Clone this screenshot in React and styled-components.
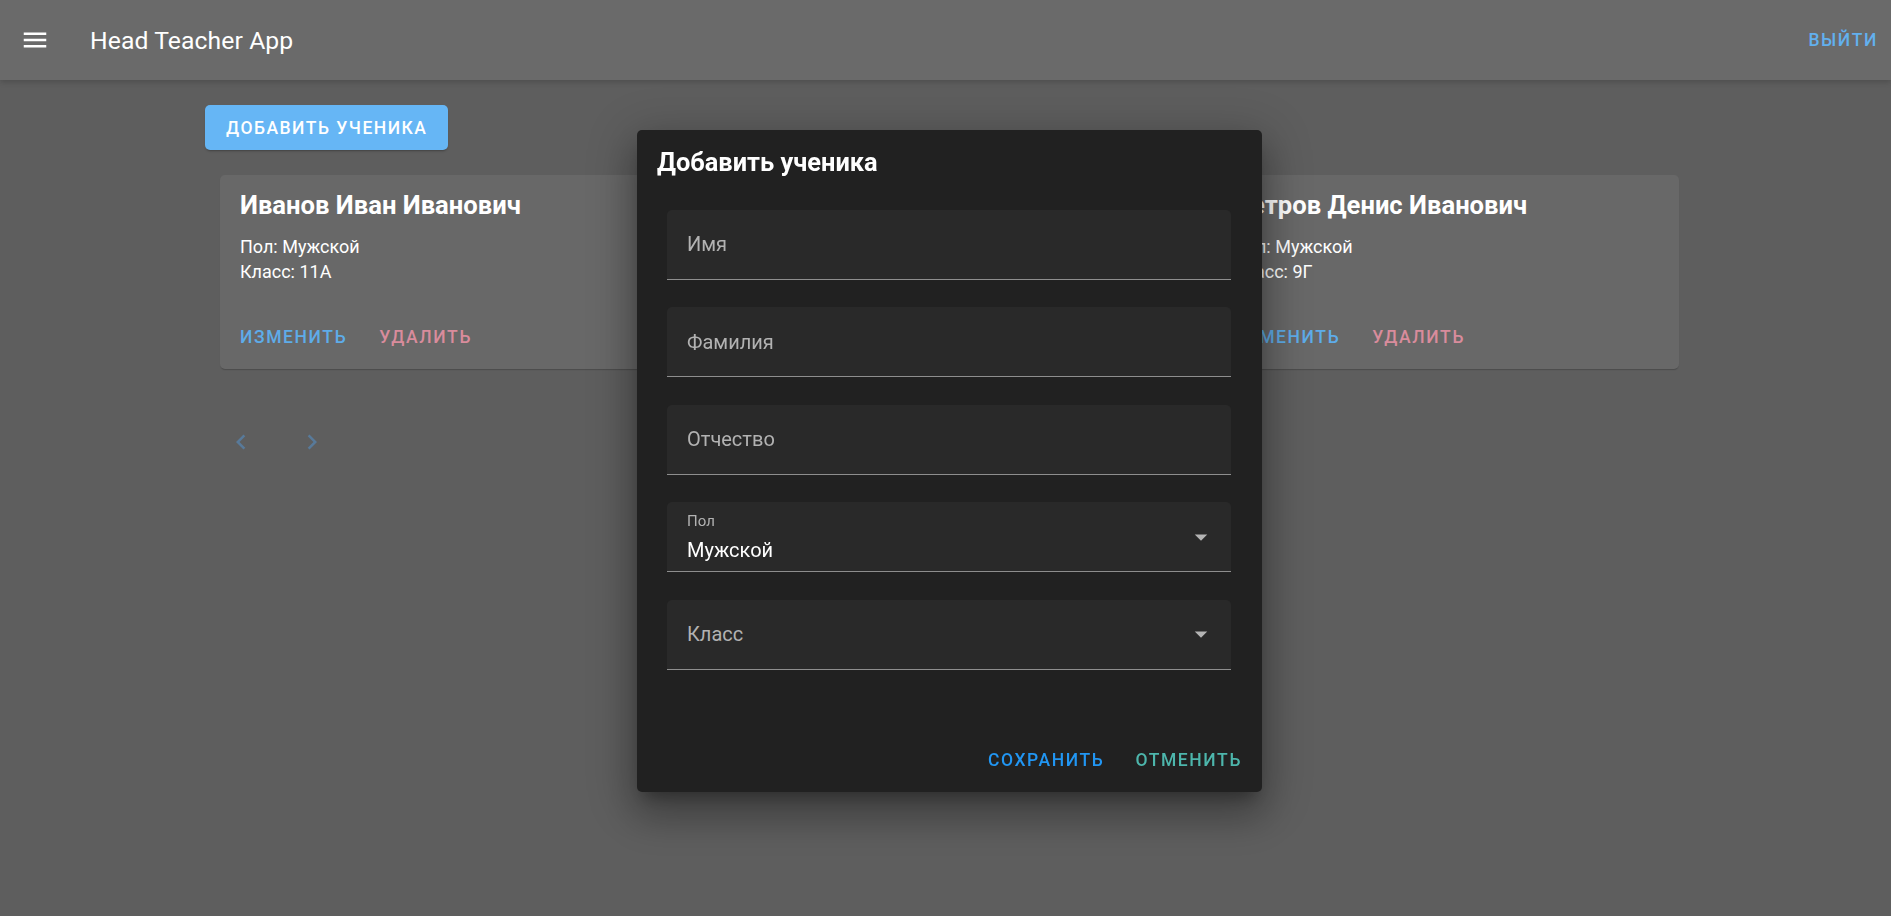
import React from 'react';
import styled, { createGlobalStyle } from 'styled-components';

const students = [
    { id: 1, name: 'Иванов Иван Иванович', gender: 'Мужской', grade: '11А' },
    { id: 2, name: 'Петров Денис Иванович', gender: 'Мужской', grade: '9Г' },
];

const fields = [
    { label: 'Имя' },
    { label: 'Фамилия' },
    { label: 'Отчество' },
    { label: 'Пол', value: 'Мужской', select: true },
    { label: 'Класс', select: true },
];

const GlobalStyle = createGlobalStyle`
    html, body {
        margin: 0;
        padding: 0;
        background: #5e5e5e;
        font-family: Roboto, "Noto Sans", sans-serif;
        overflow: hidden;
    }
`;

const Page = styled.div`
    min-height: 916px;
    background: #5e5e5e;
`;

const AppBar = styled.header`
    height: 80px;
    display: flex;
    align-items: center;
    padding: 0 3px 0 20px;
    background: #6a6a6a;
    box-shadow: 0 2px 4px -1px rgba(0, 0, 0, 0.1), 0 4px 5px 0 rgba(0, 0, 0, 0.07);
    color: #fff;
`;

const MenuButton = styled.span`
    display: flex;
    width: 30px;
    height: 30px;
    margin-right: 40px;
`;

const AppTitle = styled.h1`
    flex: 1;
    margin: 0;
    font-size: 24.7px;
    font-weight: 400;
    letter-spacing: 0.1px;
`;

const TextButton = styled.button`
    border: none;
    background: none;
    padding: 7px 10px;
    margin: 0;
    font-family: Roboto, sans-serif;
    font-size: 17.5px;
    font-weight: 500;
    line-height: 30px;
    letter-spacing: 1.6px;
    text-transform: uppercase;
    color: ${(p) => p.$color};
    cursor: pointer;
`;

const Main = styled.main`
    padding: 25px 0 0 205px;
`;

const AddButton = styled.button`
    height: 45px;
    padding: 0 21px;
    border: none;
    border-radius: 5px;
    background: #66b6f5;
    color: #fff;
    font-family: Roboto, sans-serif;
    font-size: 17.5px;
    font-weight: 500;
    letter-spacing: 1.5px;
    text-transform: uppercase;
    box-shadow: 0 3px 1px -2px rgba(0, 0, 0, 0.15), 0 2px 2px 0 rgba(0, 0, 0, 0.1);
`;

const CardRow = styled.div`
    display: flex;
    justify-content: space-between;
    width: 1459px;
    margin: 25px 0 0 15px;
`;

const Card = styled.div`
    width: 466px;
    height: 194px;
    box-sizing: border-box;
    padding: 15px 10px 0;
    border-radius: 5px;
    background: #686868;
    color: #fff;
    box-shadow: 0 2px 1px -1px rgba(0, 0, 0, 0.12), 0 1px 1px 0 rgba(0, 0, 0, 0.08);
`;

const CardName = styled.div`
    padding: 0 10px;
    font-size: 25.6px;
    font-weight: 700;
    line-height: 30px;
    margin-bottom: 14px;
`;

const CardLine = styled.div`
    padding: 0 10px;
    font-size: 18px;
    line-height: 25px;
`;

const CardActions = styled.div`
    display: flex;
    gap: 12px;
    margin-top: 31px;
`;

const Pager = styled.div`
    display: flex;
    gap: 41px;
    margin: 58px 0 0 21px;
`;

const Backdrop = styled.div`
    position: fixed;
    inset: 0;
    display: flex;
    align-items: center;
    justify-content: center;
    padding: 6px 0 0 8px;
`;

const Dialog = styled.div`
    width: 625px;
    border-radius: 5px;
    background: #212121;
    color: #fff;
    box-shadow: 0 11px 15px -7px rgba(0, 0, 0, 0.3), 0 24px 38px 3px rgba(0, 0, 0, 0.2),
        0 9px 46px 8px rgba(0, 0, 0, 0.2);
`;

const DialogTitle = styled.h2`
    margin: 0;
    padding: 12px 20px 0;
    font-size: 25.4px;
    font-weight: 700;
    line-height: 40px;
`;

const Form = styled.div`
    display: flex;
    flex-direction: column;
    gap: 27.5px;
    padding: 28px 31px 58.5px 30px;
`;

const Field = styled.div`
    height: 70px;
    box-sizing: border-box;
    display: flex;
    align-items: center;
    justify-content: space-between;
    padding: 0 15px 0 20px;
    border-radius: 5px 5px 0 0;
    background: #292929;
    border-bottom: 1px solid #8e8e8e;
`;

const FieldText = styled.div`
    display: flex;
    flex-direction: column;
`;

const Label = styled.span`
    color: #b2b2b2;
    font-size: ${(p) => (p.$small ? '15px' : '20px')};
    line-height: ${(p) => (p.$small ? '18px' : '24px')};
    margin-bottom: ${(p) => (p.$small ? '8px' : '0')};
`;

const Value = styled.span`
    font-size: 20px;
    line-height: 24px;
    color: #fff;
`;

const DialogActions = styled.div`
    display: flex;
    justify-content: flex-end;
    gap: 11px;
    padding: 10px 10px 10px;
`;

const MenuIcon = () => (
    <svg width="30" height="30" viewBox="0 0 24 24" fill="#fff">
        <path d="M3 18h18v-2H3v2zm0-5h18v-2H3v2zm0-7v2h18V6H3z" />
    </svg>
);

const Chevron = ({ dir }) => (
    <svg width="30" height="30" viewBox="0 0 24 24" fill="#587a9a">
        {dir === 'left' ? (
            <path d="M15.41 7.41 14 6l-6 6 6 6 1.41-1.41L10.83 12z" />
        ) : (
            <path d="M10 6 8.59 7.41 13.17 12l-4.58 4.59L10 18l6-6z" />
        )}
    </svg>
);

const ArrowDrop = () => (
    <svg width="30" height="30" viewBox="0 0 24 24" fill="#b4b4b4">
        <path d="M7 10l5 5 5-5z" />
    </svg>
);

const App = () => {
    return (
        <Page>
            <GlobalStyle />
            <AppBar>
                <MenuButton>
                    <MenuIcon />
                </MenuButton>
                <AppTitle>Head Teacher App</AppTitle>
                <TextButton $color="#62b0ee">Выйти</TextButton>
            </AppBar>
            <Main>
                <AddButton>Добавить ученика</AddButton>
                <CardRow>
                    {students.map((s) => (
                        <Card key={s.id}>
                            <CardName>{s.name}</CardName>
                            <CardLine>Пол: {s.gender}</CardLine>
                            <CardLine>Класс: {s.grade}</CardLine>
                            <CardActions>
                                <TextButton $color="#5eace9">Изменить</TextButton>
                                <TextButton $color="#d98c9c">Удалить</TextButton>
                            </CardActions>
                        </Card>
                    ))}
                </CardRow>
                <Pager>
                    <Chevron dir="left" />
                    <Chevron dir="right" />
                </Pager>
            </Main>
            <Backdrop>
                <Dialog>
                    <DialogTitle>Добавить ученика</DialogTitle>
                    <Form>
                        {fields.map((f) => (
                            <Field key={f.label}>
                                <FieldText>
                                    <Label $small={!!f.value}>{f.label}</Label>
                                    {f.value && <Value>{f.value}</Value>}
                                </FieldText>
                                {f.select && <ArrowDrop />}
                            </Field>
                        ))}
                    </Form>
                    <DialogActions>
                        <TextButton $color="#2196f3">Сохранить</TextButton>
                        <TextButton $color="#4db6ac">Отменить</TextButton>
                    </DialogActions>
                </Dialog>
            </Backdrop>
        </Page>
    );
};

export default App;
